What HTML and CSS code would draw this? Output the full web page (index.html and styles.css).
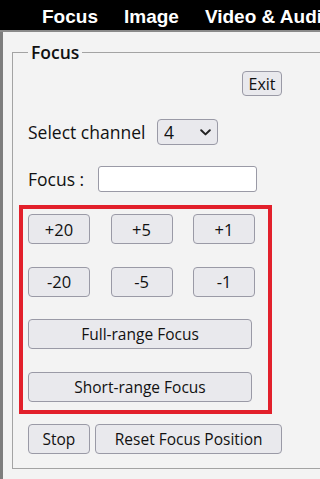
FILE: index.html
```html
<!DOCTYPE html>
<html lang="en">
<head>
<meta charset="utf-8">
<title>Focus</title>
<link rel="stylesheet" href="styles.css">
</head>
<body>
<nav class="topnav">
  <span class="nav-item">Focus</span>
  <span class="nav-item">Image</span>
  <span class="nav-item">Video &amp; Audio</span>
</nav>
<main class="panel">
  <fieldset class="focus-set">
    <legend class="focus-legend">Focus</legend>
    <div class="row row-exit">
      <button class="btn btn-exit" type="button">Exit</button>
    </div>
    <div class="row row-channel">
      <label class="row-label label-channel">Select channel</label>
      <span class="select-wrap">
        <select class="channel-select"><option>4</option></select>
        <svg class="chevron" width="11" height="7" viewBox="0 0 11 7"><path d="M1.2 1.2 L5.5 5.4 L9.8 1.2" fill="none" stroke="#222" stroke-width="2" stroke-linecap="round" stroke-linejoin="round"/></svg>
      </span>
    </div>
    <div class="row row-focus">
      <label class="row-label label-focus">Focus :</label>
      <input class="focus-input" type="text">
    </div>
    <div class="step-box">
      <div class="step-row">
        <button class="btn btn-step" type="button">+20</button>
        <button class="btn btn-step" type="button">+5</button>
        <button class="btn btn-step" type="button">+1</button>
      </div>
      <div class="step-row">
        <button class="btn btn-step" type="button">-20</button>
        <button class="btn btn-step" type="button">-5</button>
        <button class="btn btn-step" type="button">-1</button>
      </div>
      <button class="btn btn-wide" type="button">Full-range Focus</button>
      <button class="btn btn-wide" type="button">Short-range Focus</button>
    </div>
    <div class="row row-actions">
      <button class="btn btn-stop" type="button">Stop</button>
      <button class="btn btn-reset" type="button">Reset Focus Position</button>
    </div>
  </fieldset>
</main>
</body>
</html>
```
FILE: styles.css
```css
html, body {
  margin: 0;
  width: 100%;
  height: 100%;
  overflow: hidden;
}

body {
  background: #f3f3f3;
  font-family: "Open Sans", "Noto Sans", sans-serif;
  color: #111;
}

.topnav {
  height: 26px;
  padding: 4px 0 0 42px;
  background: #000;
  border-bottom: 2px solid #8a8a8a;
  display: flex;
  gap: 26px;
  overflow: hidden;
  white-space: nowrap;
  font: bold 19px/26px "Liberation Sans", Arial, sans-serif;
  color: #fff;
}

.nav-item {
  flex: none;
}

.panel {
  box-sizing: border-box;
  height: calc(100vh - 32px);
  padding: 8px 0 0 9px;
  border-left: 3px solid #7d7d7d;
  background: #f3f3f3;
  overflow: hidden;
}

.focus-set {
  margin: 0;
  width: 580px;
  min-width: 0;
  padding: 0 0 14px 6px;
  border: 1px solid #a3a3a3;
}

.focus-legend {
  margin-left: 9px;
  padding: 0 3px;
  font: 600 17.5px/24px "Open Sans", sans-serif;
  color: #111;
}

.row {
  display: flex;
  align-items: center;
  width: 254px;
  padding-left: 9px;
}

.row-exit {
  justify-content: flex-end;
  margin-top: 7px;
}

.row-channel {
  margin-top: 23px;
}

.row-focus {
  margin-top: 21px;
}

.row-label {
  font-size: 17.5px;
  line-height: 26px;
  white-space: nowrap;
}

.label-channel {
  width: 129px;
}

.label-focus {
  width: 70px;
}

.select-wrap {
  position: relative;
  display: inline-block;
  width: 61px;
  height: 26px;
}

.channel-select {
  -webkit-appearance: none;
  appearance: none;
  box-sizing: border-box;
  width: 100%;
  height: 100%;
  margin: 0;
  padding: 0 0 0 6px;
  background: #e9e9ed;
  border: 1px solid #9a9aa6;
  border-radius: 4px;
  font: 17.5px "Open Sans", sans-serif;
  color: #111;
}

.chevron {
  position: absolute;
  right: 7px;
  top: 10px;
  pointer-events: none;
}

.focus-input {
  box-sizing: border-box;
  width: 159px;
  height: 26px;
  margin: 0;
  padding: 0 4px;
  background: #fff;
  border: 1px solid #9a9aa6;
  border-radius: 3px;
}

.step-box {
  box-sizing: border-box;
  width: 253px;
  margin-top: 13px;
  padding: 5px 0 8px 5px;
  border: 4px solid #e2202b;
  display: flex;
  flex-direction: column;
  align-items: flex-start;
  gap: 22.5px;
}

.step-row {
  display: flex;
  gap: 20.5px;
}

.btn {
  box-sizing: border-box;
  height: 30px;
  margin: 0;
  padding: 0;
  background: #e9e9ed;
  border: 1px solid #9a9aa6;
  border-radius: 4px;
  font: 15.5px "Open Sans", sans-serif;
  color: #111;
  white-space: nowrap;
}

.btn-exit {
  width: 40px;
  height: 25px;
  font-size: 16px;
}

.btn-step {
  width: 62px;
  font-size: 16.5px;
}

.btn-wide {
  width: 224px;
}

.row-actions {
  margin-top: 10px;
  gap: 5.5px;
}

.btn-stop {
  width: 62px;
}

.btn-reset {
  width: 187px;
}
```
